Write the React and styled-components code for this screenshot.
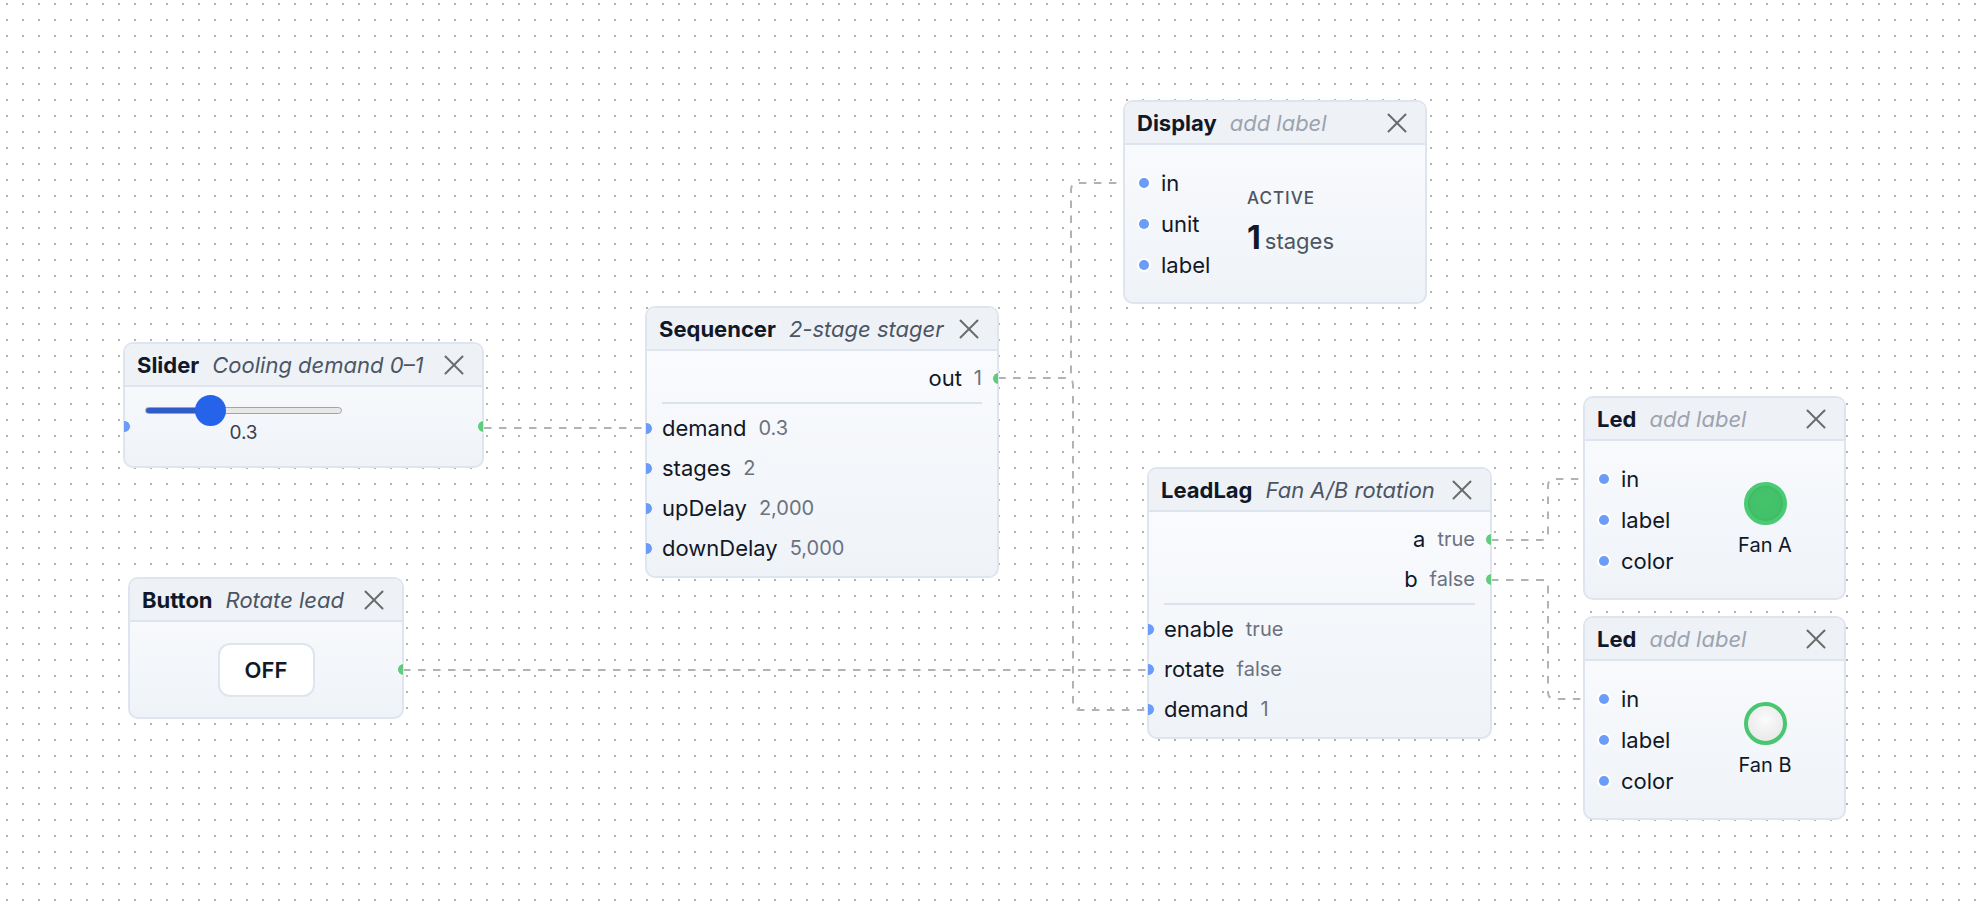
import React from 'react';
import styled, { createGlobalStyle } from 'styled-components';

const GlobalStyle = createGlobalStyle`
  html, body {
    margin: 0;
    height: 100%;
    overflow: hidden;
  }
  body {
    font-family: Inter, "Liberation Sans", sans-serif;
    background: #fff;
    color: #111827;
  }
`;

const Canvas = styled.div`
  position: relative;
  width: 100vw;
  height: 100vh;
  overflow: hidden;
  background-color: #fff;
  background-image: radial-gradient(circle, #b3b3b3 1px, transparent 1.3px);
  background-size: 16px 16px;
  background-position: -1px -4px;
`;

const Wires = styled.svg`
  position: absolute;
  inset: 0;
  width: 100%;
  height: 100%;
  pointer-events: none;
  path {
    fill: none;
    stroke: #b1b1b7;
    stroke-width: 2;
    stroke-dasharray: 7.5 7.5;
  }
`;

const Card = styled.div`
  position: absolute;
  left: ${p => p.$x}px;
  top: ${p => p.$y}px;
  width: ${p => p.$w}px;
  box-sizing: border-box;
  border: 2px solid #dfe5ee;
  border-radius: 10px;
  background: linear-gradient(180deg, #fbfcfe 0%, #eff3f8 100%);
`;

const Header = styled.div`
  display: flex;
  align-items: center;
  height: 41px;
  padding: 0 18px 0 12px;
  background: #eef2f7;
  border-bottom: 2px solid #dfe5ee;
  border-radius: 8px 8px 0 0;
  white-space: nowrap;
`;

const Title = styled.span`
  font-size: 22px;
  font-weight: 700;
  color: #111827;
`;

const Caption = styled.span`
  margin-left: 13px;
  font-size: 22px;
  font-style: italic;
  color: ${p => (p.$empty ? '#9ca3af' : '#4b5563')};
`;

const Close = styled.svg`
  margin-left: auto;
  flex: none;
  width: 20px;
  height: 20px;
  line {
    stroke: #6b6b6b;
    stroke-width: 2;
    stroke-linecap: round;
  }
`;

const Handle = styled.span`
  position: absolute;
  top: 50%;
  ${p => (p.$side === 'right' ? 'right: -7.5px;' : 'left: -7.5px;')}
  width: 13px;
  height: 13px;
  box-sizing: border-box;
  margin-top: -6.5px;
  border-radius: 50%;
  border: 1.5px solid #fff;
  background: ${p => (p.$side === 'right' ? '#62cc7e' : '#6b9cf7')};
  clip-path: ${p => (p.$side === 'right' ? 'inset(0 50% 0 0)' : 'inset(0 0 0 50%)')};
`;

const PortList = styled.div`
  padding: 7px 0 8px;
`;

const Row = styled.div`
  position: relative;
  display: flex;
  align-items: center;
  justify-content: ${p => (p.$out ? 'flex-end' : 'flex-start')};
  height: 40px;
  padding: 0 15px;
`;

const PortName = styled.span`
  font-size: 22px;
  color: #111827;
`;

const PortValue = styled.span`
  margin-left: 12px;
  font-size: 20px;
  color: #6b7280;
`;

const Divider = styled.div`
  height: 2px;
  margin: 4px 15px;
  background: #dbe2ea;
`;

const SplitBody = styled.div`
  display: flex;
  align-items: center;
  padding: 17px 20px 17px 14px;
`;

const PortColumn = styled.div`
  width: ${p => p.$w}px;
  flex: none;
`;

const PortItem = styled.div`
  display: flex;
  align-items: center;
  gap: 12px;
  height: 41px;
  font-size: 22px;
  color: #111827;
`;

const Dot = styled.span`
  width: 10px;
  height: 10px;
  border-radius: 50%;
  background: #6b9cf7;
  box-shadow: 0 0 0 2px #fff;
`;

const Readout = styled.div`
  display: flex;
  flex-direction: column;
  gap: 12px;
`;

const ReadoutLabel = styled.span`
  font-size: 17px;
  line-height: 20px;
  font-weight: 500;
  letter-spacing: 1px;
  color: #4b5563;
`;

const ReadoutValue = styled.div`
  display: flex;
  align-items: baseline;
  gap: 4px;
  line-height: 36px;
`;

const Big = styled.span`
  font-size: 32px;
  font-weight: 700;
  color: #111827;
`;

const Unit = styled.span`
  font-size: 22px;
  color: #4b5563;
`;

const LampColumn = styled.div`
  width: 110px;
  display: flex;
  flex-direction: column;
  align-items: center;
  gap: 8px;
`;

const Lamp = styled.span`
  width: 43px;
  height: 43px;
  box-sizing: border-box;
  border-radius: 50%;
  border: 4px solid ${p => (p.$on ? '#4acb73' : '#48c770')};
  background: ${p =>
    p.$on
      ? 'radial-gradient(circle at 50% 45%, #45c46c, #41bf68)'
      : 'radial-gradient(circle at 50% 40%, #fbfbfb, #e4e4e4)'};
  box-shadow: ${p => (p.$on ? 'inset 0 0 3px rgba(0,0,0,0.12)' : 'none')};
`;

const LampLabel = styled.span`
  font-size: 20px;
  line-height: 24px;
  color: #111827;
`;

const SliderBody = styled.div`
  position: relative;
  display: flex;
  flex-direction: column;
  align-items: flex-start;
  padding: 8px 20px 22px;
`;

const Range = styled.input.attrs({ type: 'range' })`
  -webkit-appearance: none;
  appearance: none;
  width: 197px;
  height: 31px;
  margin: 0;
  background: transparent;
  &::-webkit-slider-runnable-track {
    height: 7px;
    border-radius: 4px;
    border: 1px solid #a3a3a3;
    background: linear-gradient(
      to right,
      #2f5cc9 ${p => p.$fill}%,
      #e8e8e8 ${p => p.$fill}%
    );
  }
  &::-webkit-slider-thumb {
    -webkit-appearance: none;
    width: 31px;
    height: 31px;
    margin-top: -13px;
    border: none;
    border-radius: 50%;
    background: #2563eb;
  }
`;

const SliderValue = styled.span`
  width: 197px;
  margin-top: -4px;
  text-align: center;
  font-size: 19px;
  line-height: 22px;
  color: #374151;
`;

const ButtonBody = styled.div`
  position: relative;
  display: flex;
  justify-content: center;
  padding: 21px 0 20px;
`;

const Toggle = styled.button`
  width: 97px;
  height: 54px;
  box-sizing: border-box;
  border: 2px solid #dfe5ee;
  border-radius: 12px;
  background: #fff;
  font-family: inherit;
  font-size: 22px;
  font-weight: 600;
  color: #111827;
`;

// orthogonal wire with rounded corners, bending at column mx
const step = (sx, sy, tx, ty, mx, r = 7) => {
  if (sy === ty) return `M${sx} ${sy} L${tx} ${ty}`;
  const d = ty > sy ? 1 : -1;
  return `M${sx} ${sy} L${mx - r} ${sy} Q${mx} ${sy} ${mx} ${sy + d * r} L${mx} ${ty - d * r} Q${mx} ${ty} ${mx + r} ${ty} L${tx} ${ty}`;
};

const wires = [
  step(484, 428, 646, 428),
  step(998, 378, 1144, 183, 1071),
  step(998, 378, 1148, 710, 1073),
  step(403, 670, 1148, 670),
  step(1491, 540, 1604, 479, 1548),
  step(1491, 580, 1604, 699, 1548),
];

const CloseIcon = () => (
  <Close viewBox="0 0 20 20">
    <line x1="1.5" y1="1.5" x2="18.5" y2="18.5" />
    <line x1="18.5" y1="1.5" x2="1.5" y2="18.5" />
  </Close>
);

const Node = ({ x, y, w, type, label, children }) => (
  <Card $x={x} $y={y} $w={w}>
    <Header>
      <Title>{type}</Title>
      <Caption $empty={!label}>{label || 'add label'}</Caption>
      <CloseIcon />
    </Header>
    {children}
  </Card>
);

const Ports = ({ outputs, inputs }) => (
  <PortList>
    {outputs.map(([name, value]) => (
      <Row $out key={name}>
        <PortName>{name}</PortName>
        <PortValue>{value}</PortValue>
        <Handle $side="right" />
      </Row>
    ))}
    <Divider />
    {inputs.map(([name, value]) => (
      <Row key={name}>
        <Handle $side="left" />
        <PortName>{name}</PortName>
        <PortValue>{value}</PortValue>
      </Row>
    ))}
  </PortList>
);

const PortStack = ({ names, width }) => (
  <PortColumn $w={width}>
    {names.map(n => (
      <PortItem key={n}>
        <Dot />
        {n}
      </PortItem>
    ))}
  </PortColumn>
);

const LedNode = ({ y, on, name }) => (
  <Node x={1583} y={y} w={263} type="Led">
    <SplitBody>
      <PortStack names={['in', 'label', 'color']} width={111} />
      <LampColumn>
        <Lamp $on={on} />
        <LampLabel>{name}</LampLabel>
      </LampColumn>
    </SplitBody>
  </Node>
);

export default function App() {
  const demand = 0.3;
  const thumb = 31;
  const track = 197;
  const fill = ((thumb / 2 + demand * (track - thumb)) / track) * 100;

  return (
    <Canvas>
      <GlobalStyle />
      <Wires>
        {wires.map((d, i) => (
          <path key={i} d={d} />
        ))}
      </Wires>

      <Node x={123} y={342} w={361} type="Slider" label="Cooling demand 0–1">
        <SliderBody>
          <Handle $side="left" />
          <Range min={0} max={1} step={0.1} defaultValue={demand} $fill={fill} />
          <SliderValue>{demand}</SliderValue>
          <Handle $side="right" />
        </SliderBody>
      </Node>

      <Node x={128} y={577} w={276} type="Button" label="Rotate lead">
        <ButtonBody>
          <Toggle>OFF</Toggle>
          <Handle $side="right" />
        </ButtonBody>
      </Node>

      <Node x={645} y={306} w={354} type="Sequencer" label="2-stage stager">
        <Ports
          outputs={[['out', '1']]}
          inputs={[
            ['demand', '0.3'],
            ['stages', '2'],
            ['upDelay', '2,000'],
            ['downDelay', '5,000'],
          ]}
        />
      </Node>

      <Node x={1123} y={100} w={304} type="Display">
        <SplitBody>
          <PortStack names={['in', 'unit', 'label']} width={108} />
          <Readout>
            <ReadoutLabel>ACTIVE</ReadoutLabel>
            <ReadoutValue>
              <Big>1</Big>
              <Unit>stages</Unit>
            </ReadoutValue>
          </Readout>
        </SplitBody>
      </Node>

      <Node x={1147} y={467} w={345} type="LeadLag" label="Fan A/B rotation">
        <Ports
          outputs={[
            ['a', 'true'],
            ['b', 'false'],
          ]}
          inputs={[
            ['enable', 'true'],
            ['rotate', 'false'],
            ['demand', '1'],
          ]}
        />
      </Node>

      <LedNode y={396} on name="Fan A" />
      <LedNode y={616} name="Fan B" />
    </Canvas>
  );
}
